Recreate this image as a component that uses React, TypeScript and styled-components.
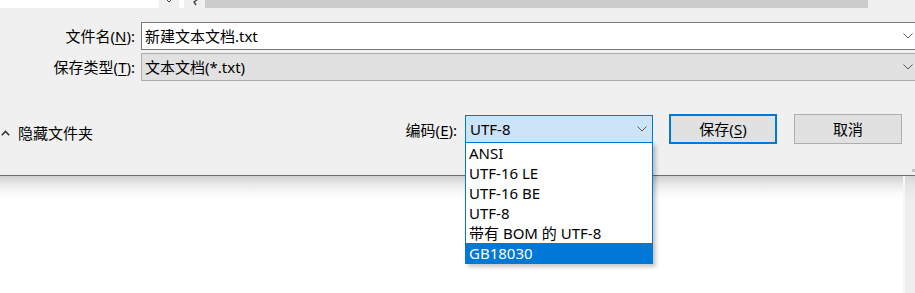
import React from 'react';
import styled, { createGlobalStyle } from 'styled-components';

const Global = createGlobalStyle`
  html, body { margin: 0; padding: 0; background: #fff; }
  body {
    font-family: "Noto Sans", "Noto Sans CJK SC", sans-serif;
    font-size: 15px;
    color: #000;
  }
  #root { width: 915px; height: 293px; overflow: hidden; position: relative; }
`;

const Page = styled.div`
  width: 915px;
  height: 293px;
  display: flex;
  flex-direction: column;
  overflow: hidden;
`;

const TopStrip = styled.div`
  display: flex;
  height: 8px;
  flex: none;
`;

const StripSeg = styled.div<{ $w?: number; $bg: string }>`
  position: relative;
  flex: ${(p) => (p.$w ? `0 0 ${p.$w}px` : '1 1 auto')};
  background: ${(p) => p.$bg};
  display: flex;
  justify-content: center;
  align-items: flex-start;
  overflow: hidden;
`;

const Dialog = styled.div`
  position: relative;
  flex: none;
  height: 153px;
  background: #f0f0f0;
  border-bottom: 1px solid #6d6d6d;
  padding-top: 14px;
  box-sizing: content-box;
  display: flex;
  flex-direction: column;
`;

const Fields = styled.div`
  display: grid;
  grid-template-columns: 135px 1fr;
  column-gap: 6px;
  row-gap: 3px;
  margin-right: -2px;
`;

const Label = styled.label`
  text-align: right;
  line-height: 28px;
  white-space: nowrap;
  u { text-decoration: underline; text-underline-offset: 2px; }
`;

const Field = styled.div<{ $disabled?: boolean }>`
  height: 28px;
  box-sizing: border-box;
  border: 1px solid ${(p) => (p.$disabled ? '#adadad' : '#7a7a7a')};
  background: ${(p) => (p.$disabled ? '#e1e1e1' : '#fff')};
  display: flex;
  align-items: center;
  padding: 0 3px 0 3px;
  line-height: 26px;
  white-space: nowrap;
`;

const FieldText = styled.span`
  flex: 1;
`;

const ActionRow = styled.div`
  display: flex;
  align-items: center;
  height: 30px;
  margin-top: 33px;
  padding-right: 13px;
`;

const HideToggle = styled.div`
  display: flex;
  align-items: center;
  gap: 8px;
  padding-left: 1px;
  margin-top: 8px;
  line-height: 20px;
  white-space: nowrap;
`;

const EncodingLabel = styled.label`
  margin-left: auto;
  margin-right: 8px;
  white-space: nowrap;
  u { text-decoration: underline; text-underline-offset: 2px; }
`;

const Combo = styled.div`
  position: relative;
  width: 188px;
  height: 28px;
  box-sizing: border-box;
  border: 1px solid #0078d7;
  background: #cce4f7;
  display: flex;
  align-items: center;
  padding: 0 5px 0 4px;
  line-height: 26px;
`;

const List = styled.ul`
  position: absolute;
  left: -1px;
  top: 100%;
  width: 188px;
  box-sizing: border-box;
  margin: 0;
  padding: 0;
  list-style: none;
  background: #fff;
  border: 1px solid #0078d7;
  box-shadow: 3px 3px 4px rgba(0, 0, 0, 0.22);
  z-index: 2;
`;

const Item = styled.li<{ $selected?: boolean }>`
  height: 20px;
  line-height: 20px;
  padding-left: 3px;
  white-space: nowrap;
  background: ${(p) => (p.$selected ? '#0078d7' : 'transparent')};
  color: ${(p) => (p.$selected ? '#fff' : '#000')};
`;

const Button = styled.button<{ $primary?: boolean }>`
  width: 108px;
  height: 30px;
  box-sizing: border-box;
  margin-left: ${(p) => (p.$primary ? '16px' : '17px')};
  border: ${(p) => (p.$primary ? '2px solid #0078d7' : '1px solid #adadad')};
  background: #e1e1e1;
  font: inherit;
  font-size: 15px;
  color: #000;
  padding: 0;
  line-height: 26px;
  u { text-decoration: underline; text-underline-offset: 2px; }
`;

const Grip = styled.div`
  position: absolute;
  right: 0;
  bottom: 3px;
  width: 3px;
  height: 3px;
  background: #c4c4c4;
`;

const Below = styled.div`
  flex: 1;
  display: flex;
`;

const Canvas = styled.div`
  flex: 1;
  background: linear-gradient(#cfcfcf 0px, #e9e9e9 8px, #fbfbfb 18px, #fff 26px);
`;

const SideStrip = styled.div`
  flex: 0 0 10px;
  border-left: 2px solid #f7f7f7;
  background: linear-gradient(#d6d6d6 0px, #e6e6e6 10px, #eeeeee 26px, #eeeeee);
`;

const Chevron = ({ color = '#5a5a5a' }: { color?: string }) => (
  <svg width="10" height="6" viewBox="0 0 10 6" style={{ display: 'block', flex: 'none' }}>
    <path d="M0.5 0.5 L5 5 L9.5 0.5" fill="none" stroke={color} strokeWidth="1" />
  </svg>
);

const UpChevron = () => (
  <svg width="9" height="6" viewBox="0 0 9 6" style={{ display: 'block', flex: 'none' }}>
    <path d="M0.8 5.2 L4.5 1.5 L8.2 5.2" fill="none" stroke="#333" strokeWidth="1.6" />
  </svg>
);

const TinyDown = () => (
  <svg width="6" height="3" viewBox="0 0 6 3" style={{ display: 'block' }}>
    <path d="M1 0 L3 2 L5 0" fill="none" stroke="#444" strokeWidth="1" />
  </svg>
);

const TinyLeft = () => (
  <svg width="8" height="6" viewBox="0 0 8 6" style={{ display: 'block' }}>
    <path d="M7 -1 L3 2 L5 5" fill="none" stroke="#444" strokeWidth="1.4" />
  </svg>
);

const encodings = ['ANSI', 'UTF-16 LE', 'UTF-16 BE', 'UTF-8', '带有 BOM 的 UTF-8', 'GB18030'];

export default function App() {
  return (
    <>
      <Global />
      <Page>
        <TopStrip>
          <StripSeg $w={159} $bg="#ffffff" />
          <StripSeg $w={20} $bg="#f0f0f0">
            <TinyDown />
          </StripSeg>
          <StripSeg $w={5} $bg="#ffffff" />
          <StripSeg $w={21} $bg="#f0f0f0">
            <TinyLeft />
          </StripSeg>
          <StripSeg $w={663} $bg="#cccccc" />
          <StripSeg $bg="#f0f0f0" />
        </TopStrip>
        <Dialog>
          <Fields>
            <Label>文件名(<u>N</u>):</Label>
            <Field>
              <FieldText>新建文本文档.txt</FieldText>
              <Chevron />
            </Field>
            <Label>保存类型(<u>T</u>):</Label>
            <Field $disabled>
              <FieldText>文本文档(*.txt)</FieldText>
              <Chevron />
            </Field>
          </Fields>
          <ActionRow>
            <HideToggle>
              <UpChevron />
              <span>隐藏文件夹</span>
            </HideToggle>
            <EncodingLabel>编码(<u>E</u>):</EncodingLabel>
            <Combo>
              <FieldText>UTF-8</FieldText>
              <Chevron />
              <List>
                {encodings.map((e, i) => (
                  <Item key={e} $selected={i === encodings.length - 1}>
                    {e}
                  </Item>
                ))}
              </List>
            </Combo>
            <Button $primary>
              保存(<u>S</u>)
            </Button>
            <Button>取消</Button>
          </ActionRow>
          <Grip />
        </Dialog>
        <Below>
          <Canvas />
          <SideStrip />
        </Below>
      </Page>
    </>
  );
}
